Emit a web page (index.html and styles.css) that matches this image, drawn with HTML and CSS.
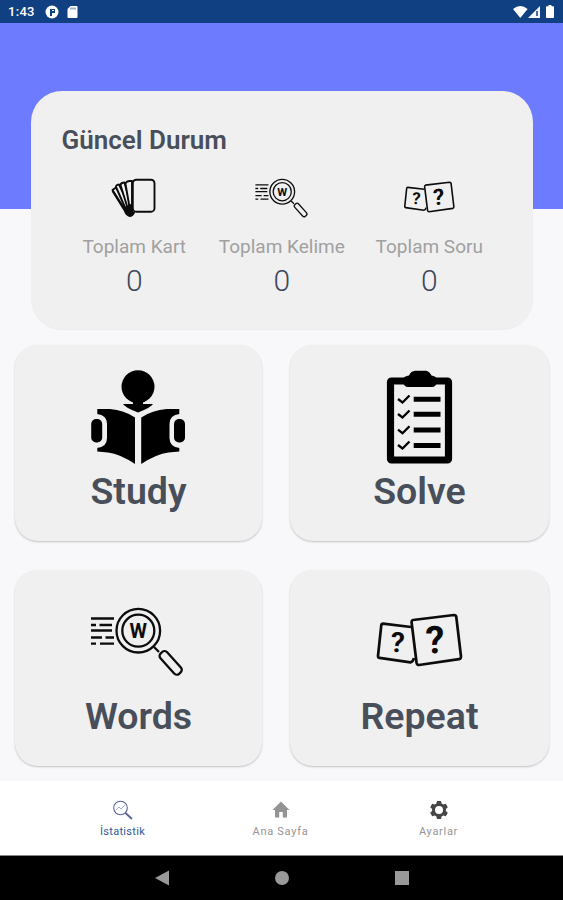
FILE: index.html
```html
<!DOCTYPE html>
<html lang="tr">
<head>
<meta charset="utf-8">
<title>Güncel Durum</title>
<link rel="stylesheet" href="styles.css">
</head>
<body>
<svg class="defs" width="0" height="0">
  <symbol id="words" viewBox="0 0 104 80">
    <g fill="none" stroke="#0c0c0c" stroke-width="2.3">
      <path d="M6 18.5H29M6 25h5M14.500 25H27M6 30.500H27M6 37.500H17M20.500 37.500H29M6 43.700h5M15 43.700H29"/>
      <circle cx="53.300" cy="30.700" r="21.800"/>
      <circle cx="53.300" cy="30.700" r="16"/>
      <path d="M69 47l5 5"/>
      <rect x="72" y="58.200" width="27.500" height="9" rx="3.500" transform="rotate(48 85.500 62.700)"/>
    </g>
    <text class="glyph" x="53.300" y="37.500" font-size="20" text-anchor="middle">W</text>
  </symbol>
  <symbol id="quiz" viewBox="0 0 98 64">
    <g fill="none" stroke="#0c0c0c" stroke-width="2.700" stroke-linejoin="round">
      <path d="M41 19 L13 15.700 Q11.500 15.700 11.300 17.200 L8 48 Q8 49.700 9.500 49.900 L40.500 54.400 Q43 54 44 50"/>
      <path d="M43 12 L84 7 Q86 7 86.300 9 L91 48.500 Q91 50.700 89 51.200 L49 57 Q47 57 46.600 55 L41.600 14.500 Q41.500 12.300 43 12Z"/>
    </g>
    <text class="glyph" x="27.500" y="44" font-size="28" text-anchor="middle" transform="rotate(5 27 35)">?</text>
    <text class="glyph" x="65" y="45.300" font-size="38" text-anchor="middle" transform="rotate(-2 65 32)">?</text>
  </symbol>
</svg>

<header class="status">
  <span class="clock">1:43</span>
  <svg width="14" height="14" viewBox="0 0 14 14"><circle cx="7" cy="7" r="6.500" fill="#fff"/><path d="M5 4h5v4H7v3H5z" fill="#103f82"/><path d="M7 5.500h2" stroke="#fff"/></svg>
  <svg class="sd" width="11" height="12" viewBox="0 0 11 12"><path d="M3.500 0H9.500Q10.500 0 10.500 1V11Q10.500 12 9.500 12H1.500Q.5 12 .5 11V3Z" fill="#fff"/><path d="M4 1.500v2M6 1.500v2M8 1.500v2" stroke="#103f82" stroke-width=".8"/></svg>
  <svg class="signals" width="43" height="14" viewBox="0 0 43 14"><path d="M0 4Q7.300-2 14.600 4L7.300 13Z" fill="#fff"/><path d="M27 1V13H15Z" fill="#fff" opacity=".95"/><path d="M24 6v5" stroke="#103f82" stroke-width="1.500"/><path d="M35.500 0h3v1.300h1.700q.8 0 .8.800v10q0 .9-.8.900h-6.400q-.8 0-.8-.9v-10q0-.8.800-.8h1.700z" fill="#fff"/></svg>
</header>

<main class="main">
  <section class="summary">
    <h1>Güncel Durum</h1>
    <div class="stats">
      <div class="stat">
        <svg width="52" height="46" viewBox="0 0 52 46">
          <g fill="#f0f0f0" stroke="#0c0c0c" stroke-width="1.900" stroke-linejoin="round">
            <path d="M4.500 16L8 13.500 22 36 19 39Z"/>
            <path d="M8 13Q7.500 11 11 10.500L23 35 19 38Z"/>
            <path d="M12.500 11Q13 8.500 16.500 8.500L23.500 34 20.500 37Z"/>
            <path d="M17.500 10Q18 7 22 7H24V36H22Z"/>
            <path d="M4.500 17L17 37"/>
            <rect x="24.800" y="5.700" width="21.700" height="32" rx="3.500"/>
          </g>
          <path d="M16.500 33L25 29V37.500H27.500Q25.500 43 21.500 43 17 41.500 16 37Z" fill="#0c0c0c"/>
        </svg>
        <span class="label">Toplam Kart</span><span class="value">0</span>
      </div>
      <div class="stat">
        <svg width="59" height="46"><use href="#words"/></svg>
        <span class="label">Toplam Kelime</span><span class="value">0</span>
      </div>
      <div class="stat">
        <svg width="58" height="46"><use href="#quiz"/></svg>
        <span class="label">Toplam Soru</span><span class="value">0</span>
      </div>
    </div>
  </section>

  <section class="tiles">
    <a class="tile">
      <svg class="book-icon" width="100" height="97" viewBox="0 0 100 97">
        <circle cx="50" cy="18.700" r="16.500"/>
        <path d="M35 36H45V33H55V36H65Q63 39.500 50 44.500 37 39.500 35 36Z"/>
        <path d="M9.300 41H22Q36 42 47 49.500V96Q32 86 20 84.500L9.300 83.500Z"/>
        <path d="M91.300 41H78.500Q64.500 42 53.200 49.500V96Q68.500 86 80.500 84.500L91.300 83.500Z"/>
        <path d="M0 46H9Q19 47 19 56V70Q19 79 9 80H0ZM100 46H91.500Q81.500 47 81.500 56V70Q81.500 79 91.500 80H100Z" fill="#f0f0f0"/>
        <rect x="3.200" y="51" width="11" height="23.500" rx="5"/>
        <rect x="86" y="51" width="11" height="23.500" rx="5"/>
      </svg>
      <span>Study</span>
    </a>
    <a class="tile">
      <svg width="72" height="97" viewBox="0 0 72 97">
        <rect x="6.500" y="13" width="58" height="79" rx="1" fill="none" stroke="#000" stroke-width="7.200"/>
        <path d="M19 11Q20 8 25 7.500 27 3 31 2.700H42Q45 3 47.500 7.500 52 8 53 11V14Q52 19 48 19H24Q20 19 19 14Z"/>
        <path d="M29.700 31.300H56.500M29.700 46.300H56.500M29.700 62H56.500M29.700 77.500H56.500" stroke="#000" stroke-width="5"/>
        <path d="M14 31l4.500 3.500 7-7M14 46l4.500 3.500 7-7M14 61.700l4.500 3.500 7-7M14 77l4.500 3.500 7-7" fill="none" stroke="#000" stroke-width="2.300"/>
      </svg>
      <span>Solve</span>
    </a>
    <a class="tile">
      <svg class="words-icon" width="104" height="80"><use href="#words"/></svg>
      <span>Words</span>
    </a>
    <a class="tile">
      <svg class="quiz-icon" width="98" height="64"><use href="#quiz"/></svg>
      <span>Repeat</span>
    </a>
  </section>
</main>

<nav class="tabs">
  <a class="tab active">
    <svg width="22" height="20" viewBox="0 0 22 20" fill="none" stroke="#5a6298"><circle cx="8.500" cy="8" r="6.800" stroke-width="1.100"/><path d="M4 10l3-3 2 2 4-4" stroke="#a3b0d4"/><path d="M13.500 13l6.500 6" stroke-width="1.800"/></svg>
    <span>İstatistik</span>
  </a>
  <a class="tab">
    <svg width="20" height="20" viewBox="0 0 20 20" fill="#949494"><path d="M10 1.500L18.500 10H16V17.500H11.800V12H8.200V17.500H4V10H1.500Z"/></svg>
    <span>Ana Sayfa</span>
  </a>
  <a class="tab">
    <svg width="20" height="20" viewBox="0 0 20 20"><path d="M8 1h4l.6 2.600 1.700 1 2.500-.8 2 3.400-1.900 1.800v2l1.900 1.800-2 3.400-2.500-.8-1.700 1L12 19H8l-.6-2.600-1.700-1-2.500.8-2-3.400L3.100 11V9L1.200 7.200l2-3.400 2.500.8 1.700-1z" fill="#454545"/><circle cx="10" cy="10" r="4" fill="#fff"/></svg>
    <span>Ayarlar</span>
  </a>
</nav>

<footer class="system">
  <svg width="16" height="18" viewBox="0 0 16 18"><path d="M1 9L15 1.500V16.500Z"/></svg>
  <svg width="16" height="16" viewBox="0 0 16 16"><circle cx="8" cy="8" r="7"/></svg>
  <svg width="16" height="16" viewBox="0 0 16 16"><rect x="1" y="1" width="14" height="14"/></svg>
</footer>
</body>
</html>
```
FILE: styles.css
```css
* { box-sizing: border-box; }

body {
  margin: 0;
  height: 900px;
  display: flex;
  flex-direction: column;
  overflow: hidden;
  background: #f8f8fb;
  font-family: Roboto, sans-serif;
}

.defs { display: none; }

.glyph { font-family: Roboto, sans-serif; font-weight: 700; fill: #0c0c0c; }

.status {
  height: 23px;
  display: flex;
  align-items: center;
  padding: 0 7px 0 8px;
  background: #103f82;
  color: #fff;
}
.clock { width: 37px; font-size: 13px; font-weight: 500; letter-spacing: .3px; }
.sd { margin-left: 8px; }
.signals { margin-left: auto; }

.main {
  height: 758px;
  padding: 68px 14px 0 15px;
  background: linear-gradient(#6c7bff 0 186.5px, #f8f8fb 186.5px);
}

.summary {
  height: 238px;
  margin: 0 16px 0 15.5px;
  padding: 34px 30px 0;
  border-radius: 31px;
  background: #f0f0f0;
  box-shadow: 0 1px 1px rgba(0, 0, 0, .05);
}
.summary h1 {
  margin: 0 0 0 1px;
  font-size: 26px;
  line-height: 30px;
  font-weight: 600;
  color: #494f5a;
}
.stats { display: grid; grid-template-columns: repeat(3, 1fr); margin-top: 19px; }
.stat { display: flex; flex-direction: column; align-items: center; }
.label { margin-top: 15px; font-size: 19px; line-height: 24px; white-space: nowrap; color: #a0a0a0; }
.value { margin-top: 5px; font-size: 30px; line-height: 34px; font-weight: 350; color: #3f475b; }

.tiles {
  display: grid;
  grid-template-columns: 247px 259px;
  grid-auto-rows: 196px;
  gap: 29px 28px;
  margin-top: 15.5px;
}
.tile {
  display: flex;
  flex-direction: column;
  align-items: center;
  padding-top: 23px;
  border-radius: 23px;
  background: #f0f0f0;
  box-shadow: 0 1px 2px rgba(0, 0, 0, .22);
  color: #494f5a;
  font-size: 37.5px;
  line-height: 44px;
  font-weight: 600;
}
.tile span { margin-top: 4px; }
.book-icon { margin-right: 2px; }
.words-icon { margin: 7px 3px 10px 0; }
.quiz-icon { margin: 15px 2px 18px 0; }

.tabs {
  height: 75px;
  display: grid;
  grid-template-columns: repeat(3, 158px);
  justify-content: center;
  padding: 19px 2px 0 0;
  background: #fff;
  border-bottom: 1px solid #888;
}
.tab {
  display: flex;
  flex-direction: column;
  align-items: center;
  gap: 5px;
  font-size: 11px;
  line-height: 14px;
  letter-spacing: .7px;
  color: #949494;
}
.active { color: #2f5c94; }
.active span { letter-spacing: .3px; }

.system {
  height: 44px;
  display: flex;
  align-items: center;
  justify-content: center;
  gap: 104px;
  background: #000;
  fill: #999;
}
```
